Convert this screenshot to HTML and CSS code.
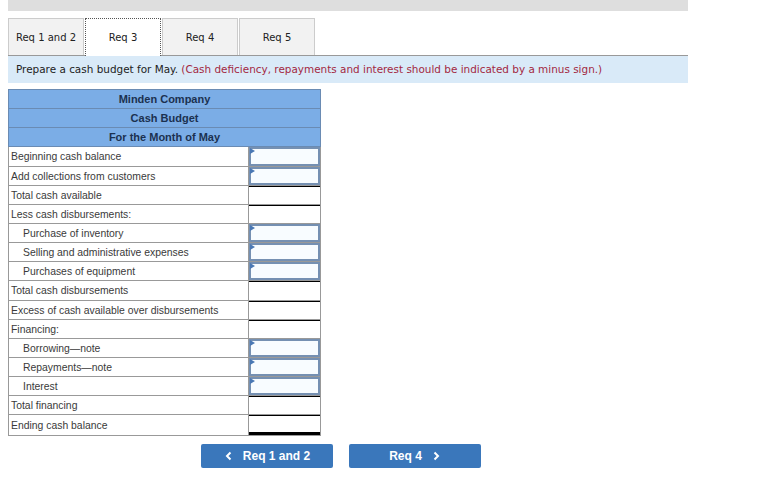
FILE: index.html
```html
<!DOCTYPE html>
<html lang="en">
<head>
  <meta charset="UTF-8" />
  <title>Cash Budget - Req 3</title>
  <link rel="stylesheet" href="styles.css">
</head>
<body>
  <div class="page">
    <div class="topbar"></div>

    <ul class="tabs">
      <li>Req 1 and 2</li>
      <li class="active">Req 3</li>
      <li>Req 4</li>
      <li>Req 5</li>
    </ul>

    <div class="instr">
      Prepare a cash budget for May. <span class="note">(Cash deficiency, repayments and interest should be indicated by a minus sign.)</span>
    </div>

    <table class="budget">
      <tr><th colspan="2">Minden Company</th></tr>
      <tr><th colspan="2">Cash Budget</th></tr>
      <tr><th colspan="2">For the Month of May</th></tr>
      <tr class="tall"><td class="lbl">Beginning cash balance</td><td class="val"><div class="inp"></div></td></tr>
      <tr><td class="lbl">Add collections from customers</td><td class="val"><div class="inp"></div></td></tr>
      <tr><td class="lbl">Total cash available</td><td class="val"><div class="sum"></div></td></tr>
      <tr><td class="lbl">Less cash disbursements:</td><td class="val"><div class="sum"></div></td></tr>
      <tr><td class="lbl indent">Purchase of inventory</td><td class="val"><div class="inp"></div></td></tr>
      <tr><td class="lbl indent">Selling and administrative expenses</td><td class="val"><div class="inp"></div></td></tr>
      <tr><td class="lbl indent">Purchases of equipment</td><td class="val"><div class="inp"></div></td></tr>
      <tr class="tall"><td class="lbl">Total cash disbursements</td><td class="val"><div class="sum"></div></td></tr>
      <tr><td class="lbl">Excess of cash available over disbursements</td><td class="val"><div class="sum"></div></td></tr>
      <tr><td class="lbl">Financing:</td><td class="val"><div class="sum"></div></td></tr>
      <tr><td class="lbl indent">Borrowing—note</td><td class="val"><div class="inp"></div></td></tr>
      <tr><td class="lbl indent">Repayments—note</td><td class="val"><div class="inp"></div></td></tr>
      <tr><td class="lbl indent">Interest</td><td class="val"><div class="inp"></div></td></tr>
      <tr><td class="lbl">Total financing</td><td class="val"><div class="sum"></div></td></tr>
      <tr><td class="lbl">Ending cash balance</td><td class="val"><div class="sum final"></div></td></tr>
    </table>

    <div class="nav">
      <button class="btn">
        <svg width="10" height="10" viewBox="0 0 10 10"><polyline points="6.5,1.5 3,5 6.5,8.5" fill="none" stroke="#fff" stroke-width="2"/></svg>
        Req 1 and 2
      </button>
      <button class="btn">
        Req 4
        <svg width="10" height="10" viewBox="0 0 10 10"><polyline points="3.5,1.5 7,5 3.5,8.5" fill="none" stroke="#fff" stroke-width="2"/></svg>
      </button>
    </div>
  </div>
</body>
</html>
```

FILE: styles.css
```css
* {
  box-sizing: border-box;
  margin: 0;
  padding: 0;
}
body {
  background: #fff;
  font-family: "DejaVu Sans", Verdana, sans-serif;
  color: #222;
}
.page {
  width: 688px;
  padding-left: 8px;
}
.topbar {
  height: 11px;
  background: #dedede;
}
.tabs {
  list-style: none;
  display: flex;
  gap: 1px;
  margin-top: 7px;
  border-bottom: 1px solid #999;
  height: 38px;
}
.tabs li {
  width: 76px;
  height: 37px;
  line-height: 37px;
  text-align: center;
  font-size: 10px;
  background: #f2f2f2;
  border: 1px solid #ccc;
  border-bottom: none;
  color: #222;
}
.tabs li.active {
  height: 38px;
  background: #fff;
  border: 1px dotted #555;
  border-bottom: none;
}
.instr {
  height: 27px;
  line-height: 27px;
  padding-left: 8px;
  background: #d9eaf8;
  font-size: 10.45px;
  color: #222;
}
.instr .note {
  color: #a3283f;
}
.budget {
  margin-top: 6px;
  width: 313px;
  border-collapse: collapse;
  font-family: "Liberation Sans", Arial, sans-serif;
  font-size: 10.4px;
  color: #3a3a3a;
}
.budget th {
  height: 19px;
  padding: 0;
  background: #7badE6;
  border: 1px solid #6a8bb3;
  color: #1b3150;
  font-size: 11px;
  font-weight: bold;
  text-align: center;
}
.budget td {
  height: 19px;
  padding: 0;
  border: 1px solid #999;
}
.budget .tall td {
  height: 20px;
}
.budget .lbl {
  width: 241px;
  padding-left: 2px;
}
.budget .lbl.indent {
  padding-left: 14px;
}
.budget .val {
  width: 72px;
}
.inp {
  position: relative;
  height: 100%;
  min-height: 18px;
  border: 2px solid #7590b2;
  background: #f8fcff;
}
.inp::before {
  content: "";
  position: absolute;
  left: -1px;
  top: -1px;
  border-left: 5px solid #4a78b4;
  border-top: 3px solid transparent;
  border-bottom: 3px solid transparent;
}
.sum {
  height: 100%;
  min-height: 18px;
  border-top: 1px solid #000;
}
.sum.final {
  min-height: 20px;
  border-bottom: 3px solid #000;
}
.nav {
  display: flex;
  gap: 16px;
  margin-top: 8px;
  padding-left: 193px;
}
.btn {
  display: flex;
  align-items: center;
  justify-content: center;
  gap: 9px;
  width: 132px;
  height: 24px;
  background: #3a77bb;
  border: none;
  border-radius: 2px;
  color: #fff;
  font-family: "Liberation Sans", Arial, sans-serif;
  font-size: 12px;
  font-weight: bold;
}
```
